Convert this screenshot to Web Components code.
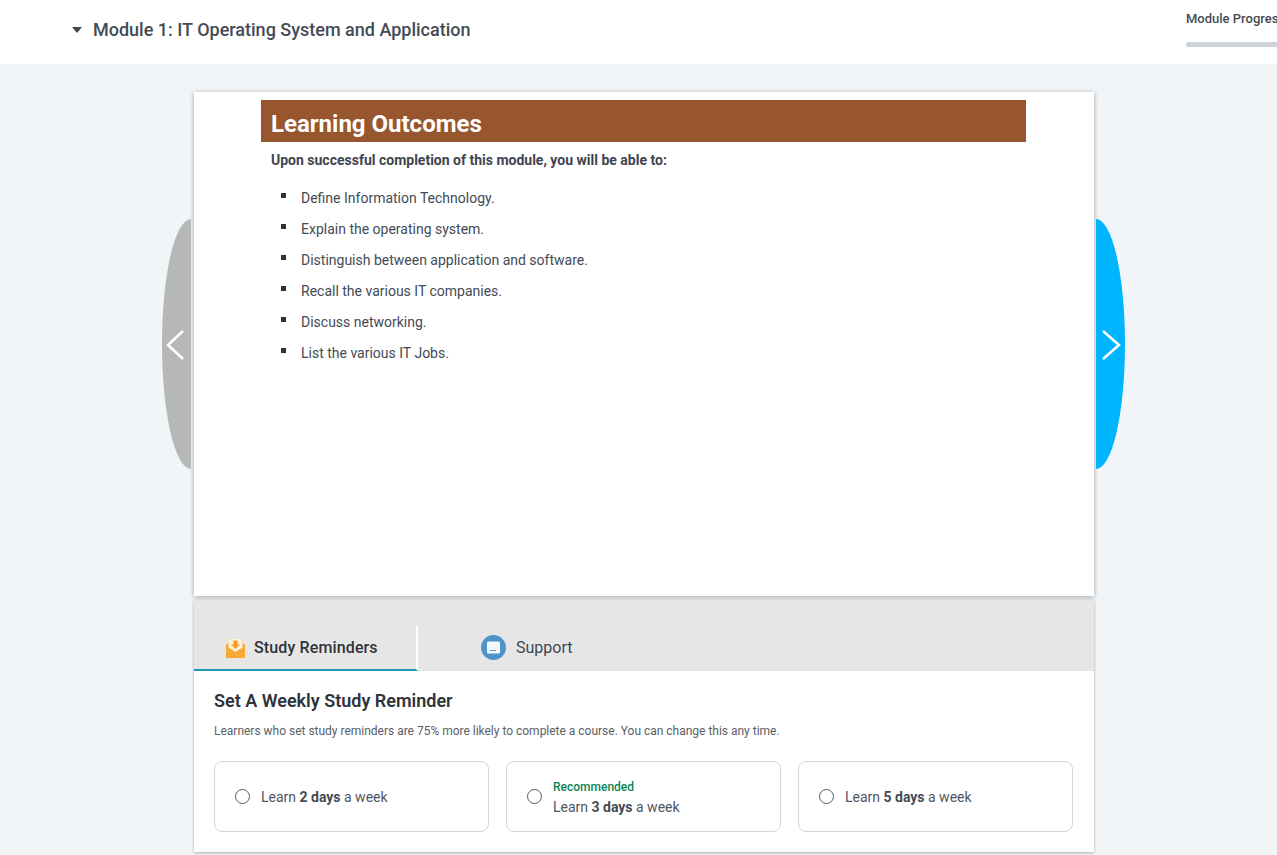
<!DOCTYPE html>
<html><head><meta charset="utf-8">
<style>
html,body{margin:0;padding:0;height:855px;overflow:hidden;background:#f1f5f7;font-family:Roboto,"Liberation Sans",sans-serif;color:#3f4650}
</style></head><body>
<app-page></app-page>
<template id="t-header"><style>
:host{display:flex;align-items:flex-start;height:64px;background:#fff;overflow:hidden}
.caret{width:0;height:0;border:5.5px solid transparent;border-top:6px solid #3f4650;border-bottom:0;margin:27px 11px 0 72px;flex:none}
h1{margin:0;font:500 18px/24px Roboto,sans-serif;color:#444b55;padding-top:18px;width:1092px;flex:none}
.p{flex:none;width:200px;padding:11px 0 0 1px}
.p span{display:block;font:500 13px/16px Roboto,sans-serif;color:#444b55;white-space:nowrap}
.p i{display:block;height:5px;background:#ced3da;border-radius:3px;margin-top:15px}
</style><div class="caret"></div><h1><slot name="title"></slot></h1><div class="p"><span><slot name="progress"></slot></span><i></i></div></template>

<template id="t-nav"><style>
:host{display:block;position:absolute;top:219px;width:29px;height:250px}
:host([dir-side=prev]){left:162px;background:#b5b8b7;border-radius:100% 0 0 100%/50% 0 0 50%}
:host([dir-side=next]){left:1096px;background:#00b5fd;border-radius:0 100% 100% 0/0 50% 50% 0}
svg{position:absolute;top:111px;width:20px;height:30px;fill:none;stroke:#fff;stroke-width:2.5}
:host([dir-side=prev]) svg{left:4px}
:host([dir-side=next]) svg{left:5px}
</style><svg viewBox="0 0 20 30"><path id="p"/></svg></template>

<template id="t-slide"><style>
:host{display:block;width:900px;height:504px;box-sizing:border-box;background:#fff;box-shadow:0 1px 5px rgba(0,0,0,.32);padding:8px 68px 0 67px}
h2{margin:0;background:#98562e;color:#fff;font:700 24px/42px Roboto,sans-serif;height:42px;padding:3px 10px 0;box-sizing:border-box}
</style><h2><slot name="heading"></slot></h2><slot></slot></template>

<template id="t-outcomes"><style>
:host{display:block;padding:9px 10px 0;font:14px/18px Roboto,sans-serif;color:#444b55}
p{margin:0 0 13px;font-weight:700;color:#3d4450}
ul{margin:0;padding:0 0 0 30px;list-style:none}
</style><p><slot name="intro"></slot></p><ul><slot></slot></ul></template>

<template id="t-li"><style>
:host{display:flex;height:31px;align-items:center;position:relative}
i{position:absolute;left:-20px;top:11px;width:5px;height:5px;background:#2f3238}
</style><i></i><slot></slot></template>

<template id="t-tabs"><style>
:host{display:block;width:900px;background:#fff;box-shadow:0 1px 3px rgba(0,0,0,.3);margin-top:4px}
.bar{display:flex;height:71px;background:#e6e6e6;box-sizing:border-box;padding-top:26px}
.body{height:181px;box-sizing:border-box;padding:19px 20px 0}
</style><div class="bar"><slot name="tab"></slot></div><div class="body"><slot></slot></div></template>

<template id="t-tab"><style>
:host{display:flex;align-items:center;box-sizing:border-box;height:45px;font:16px/22px Roboto,sans-serif;color:#3f4650;padding-bottom:2px}
:host([active]){width:224px;padding-left:32px;padding-bottom:0;font-weight:500;color:#2f343b;border-bottom:2px solid #2394b2;border-right:2px solid #fff;gap:9px;letter-spacing:.13px}
:host(:not([active])){padding-left:63px;gap:10px}
</style><slot name="icon"></slot><slot></slot></template>

<template id="t-reminder"><style>
:host{display:block}
h3{margin:0;font:600 18px/22px Roboto,sans-serif;color:#2f343b}
p{margin:11px 0 22px;font:12px/16px Roboto,sans-serif;color:#5a6069;letter-spacing:-.01px}
.g{display:flex;gap:17px}
</style><h3><slot name="title"></slot></h3><p><slot name="desc"></slot></p><div class="g"><slot></slot></div></template>

<template id="t-option"><style>
:host{display:flex;align-items:center;box-sizing:border-box;width:275px;height:71px;border:1px solid #d4d6d9;border-radius:8px;padding-left:20px;font:14px/20px Roboto,sans-serif;color:#50565f;background:#fff}
.r{width:13px;height:13px;border:1px solid #555b63;border-radius:50%;flex:none;margin-right:11px}
.rec{display:block;font:500 12px/14px Roboto,sans-serif;color:#0b8457;margin:3px 0 3px}
::slotted(b){font-weight:700;color:#444b55}
</style><div class="r"></div><div><span class="rec" id="rec"><slot name="rec"></slot></span><slot></slot></div></template>

<template id="t-page"><style>
:host{display:block;position:relative;height:855px;overflow:hidden}
.main{display:flex;flex-direction:column;align-items:center;padding-top:28px;width:1288px}
</style><slot name="header"></slot><div class="main"><slot></slot></div><slot name="nav"></slot></template>

<script>
function def(n,t){customElements.define(n,class extends HTMLElement{constructor(){super();const s=this.attachShadow({mode:'open'});s.appendChild(document.getElementById(t).content.cloneNode(true))}})}
def('app-page','t-page');
def('module-header','t-header');
def('slide-nav','t-nav');
def('lesson-slide','t-slide');
def('outcome-list','t-outcomes');
def('outcome-item','t-li');
def('tab-panel','t-tabs');
def('tab-item','t-tab');
def('reminder-form','t-reminder');
def('day-option','t-option');
document.querySelector('app-page').innerHTML=`
<module-header slot="header"><span slot="title">Module 1: IT Operating System and Application</span><span slot="progress">Module Progress</span></module-header>
<lesson-slide><span slot="heading">Learning Outcomes</span>
<outcome-list><span slot="intro">Upon successful completion of this module, you will be able to:</span>
<outcome-item>Define Information Technology.</outcome-item>
<outcome-item>Explain the operating system.</outcome-item>
<outcome-item>Distinguish between application and software.</outcome-item>
<outcome-item>Recall the various IT companies.</outcome-item>
<outcome-item>Discuss networking.</outcome-item>
<outcome-item>List the various IT Jobs.</outcome-item>
</outcome-list></lesson-slide>
<tab-panel>
<tab-item slot="tab" active><svg slot="icon" width="19" height="20" viewBox="0 0 19 20" style="display:block;flex:none"><path d="M0 7 L2.500 5 V1 H16.500 V5 L19 7 V20 H0Z" fill="#f6a935"/><path d="M2.500 1H16.500V9.500L9.500 14 2.500 9.500Z" fill="#fdf0da"/><path d="M7.500 2.500h4V6.500h2.500L9.500 11 5 6.500h2.500z" fill="#f39a1f"/></svg>Study Reminders</tab-item>
<tab-item slot="tab"><svg slot="icon" width="25" height="25" viewBox="0 0 25 25" style="display:block;flex:none"><circle cx="12.500" cy="12.500" r="12.500" fill="#4d94c9"/><rect x="6" y="6.500" width="13" height="12" rx="1.500" fill="#f4f8fb"/><path d="M9 15.500h6" stroke="#4d94c9" stroke-width="1"/></svg>Support</tab-item>
<reminder-form><span slot="title">Set A Weekly Study Reminder</span><span slot="desc">Learners who set study reminders are 75% more likely to complete a course. You can change this any time.</span>
<day-option>Learn <b>2 days</b> a week</day-option>
<day-option><span slot="rec">Recommended</span>Learn <b>3 days</b> a week</day-option>
<day-option>Learn <b>5 days</b> a week</day-option>
</reminder-form></tab-panel>
<slide-nav slot="nav" dir-side="prev"></slide-nav>
<slide-nav slot="nav" dir-side="next"></slide-nav>`;
document.querySelectorAll('slide-nav').forEach(n=>{n.shadowRoot.getElementById('p').setAttribute('d',n.getAttribute('dir-side')==='prev'?'M17 1 L2 15 L17 29':'M2 1 L18 15 L2 29')});
document.querySelectorAll('day-option').forEach(o=>{if(!o.querySelector('[slot=rec]'))o.shadowRoot.getElementById('rec').style.display='none'});
</script>
</body></html>
